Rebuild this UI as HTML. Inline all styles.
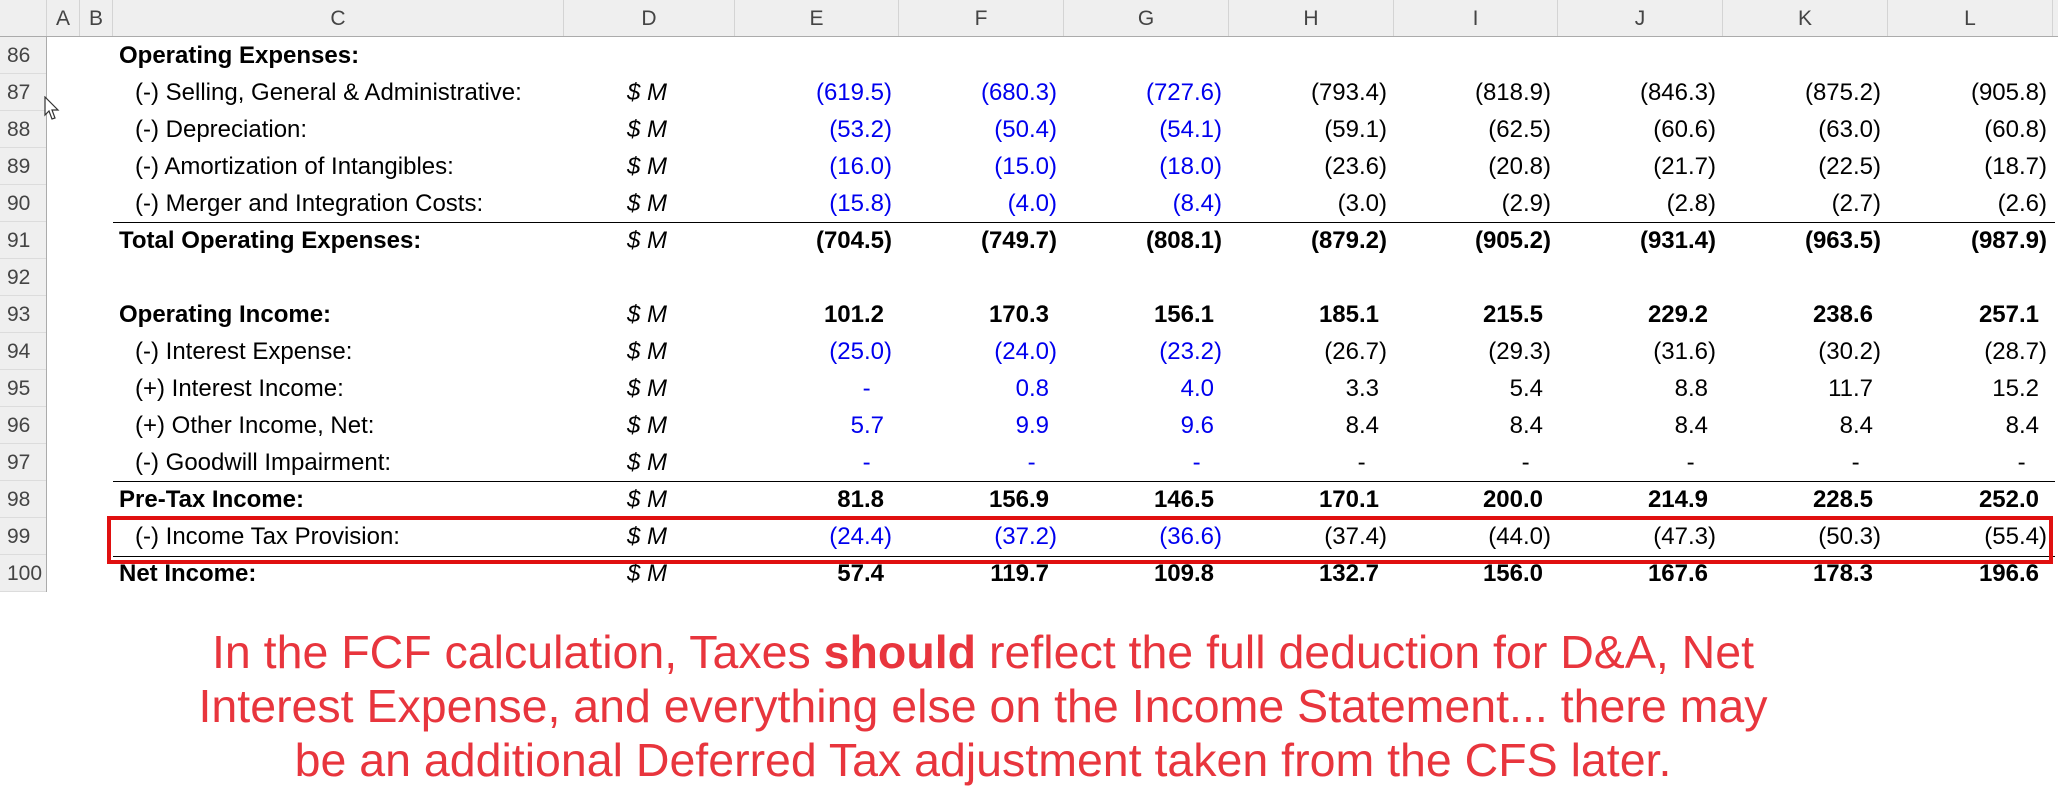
<!DOCTYPE html>
<html><head><meta charset="utf-8"><style>
body{margin:0;width:2058px;height:811px;background:#fff;overflow:hidden;font-family:"Liberation Sans",Arial,sans-serif;position:relative}
.hdr{position:absolute;left:0;top:0;width:2058px;height:37px;background:#efefef;border-bottom:1px solid #ababab;box-sizing:border-box}
.hdr div{position:absolute;top:0;height:36px;line-height:38px;text-align:center;font-size:21px;color:#444;border-right:1px solid #d4d4d4;box-sizing:border-box}
.rn{position:absolute;left:0;top:37px;width:47px;height:555px;background:#efefef;border-right:1px solid #ababab;box-sizing:border-box}
.rn div{height:37px;line-height:37px;font-size:21px;color:#444;padding-left:7px;border-bottom:1px solid #dcdcdc;box-sizing:border-box}
.row{position:absolute;left:0;width:2058px;height:37px;line-height:37px;font-size:24px;color:#000}
.row span{position:absolute;top:0;white-space:nowrap}
.b{font-weight:bold}
.v{text-align:right;width:160px}
.blue{color:#0000ee}
.ln{position:absolute;left:113px;width:1942px;height:1px;background:#000}
.note{position:absolute;left:0;width:1966px;text-align:center;color:#e8353d;font-size:46.5px;line-height:54px;top:625px}
</style></head><body>
<div class="hdr">
<div style="left:0;width:47px"></div>
<div style="left:47px;width:33px">A</div>
<div style="left:80px;width:33px">B</div>
<div style="left:113px;width:451px">C</div>
<div style="left:564px;width:171px">D</div>
<div style="left:735px;width:164px">E</div>
<div style="left:899px;width:165px">F</div>
<div style="left:1064px;width:165px">G</div>
<div style="left:1229px;width:165px">H</div>
<div style="left:1394px;width:164px">I</div>
<div style="left:1558px;width:165px">J</div>
<div style="left:1723px;width:165px">K</div>
<div style="left:1888px;width:165px">L</div>
</div>
<div class="rn"><div>86</div><div>87</div><div>88</div><div>89</div><div>90</div><div>91</div><div>92</div><div>93</div><div>94</div><div>95</div><div>96</div><div>97</div><div>98</div><div>99</div><div>100</div></div>
<div id="rows"></div>
<div class="ln" style="top:222px"></div>
<div class="ln" style="top:481px"></div>
<div class="ln" style="top:556px"></div>
<div style="position:absolute;left:107px;top:516px;width:1946px;height:48px;border:4px solid #e01010;box-sizing:border-box"></div>
<div class="note">In the FCF calculation, Taxes <b>should</b> reflect the full deduction for D&amp;A, Net<br>Interest Expense, and everything else on the Income Statement... there may<br>be an additional Deferred Tax adjustment taken from the CFS later.</div>
<svg style="position:absolute;left:44px;top:96px" width="18" height="26" viewBox="0 0 18 26"><path d="M1 1 L1 19 L5 15 L8 23 L11 22 L8 14 L14 14 Z" fill="#fff" stroke="#333" stroke-width="1.2"/></svg>
<script>
const R=[
["Operating Expenses:",1,null],
["(-) Selling, General & Administrative:",0,["(619.5)","(680.3)","(727.6)","(793.4)","(818.9)","(846.3)","(875.2)","(905.8)"]],
["(-) Depreciation:",0,["(53.2)","(50.4)","(54.1)","(59.1)","(62.5)","(60.6)","(63.0)","(60.8)"]],
["(-) Amortization of Intangibles:",0,["(16.0)","(15.0)","(18.0)","(23.6)","(20.8)","(21.7)","(22.5)","(18.7)"]],
["(-) Merger and Integration Costs:",0,["(15.8)","(4.0)","(8.4)","(3.0)","(2.9)","(2.8)","(2.7)","(2.6)"]],
["Total Operating Expenses:",1,["(704.5)","(749.7)","(808.1)","(879.2)","(905.2)","(931.4)","(963.5)","(987.9)"]],
["",0,null],
["Operating Income:",1,["101.2","170.3","156.1","185.1","215.5","229.2","238.6","257.1"]],
["(-) Interest Expense:",0,["(25.0)","(24.0)","(23.2)","(26.7)","(29.3)","(31.6)","(30.2)","(28.7)"]],
["(+) Interest Income:",0,["-&nbsp;&nbsp;","0.8","4.0","3.3","5.4","8.8","11.7","15.2"]],
["(+) Other Income, Net:",0,["5.7","9.9","9.6","8.4","8.4","8.4","8.4","8.4"]],
["(-) Goodwill Impairment:",0,["-&nbsp;&nbsp;","-&nbsp;&nbsp;","-&nbsp;&nbsp;","-&nbsp;&nbsp;","-&nbsp;&nbsp;","-&nbsp;&nbsp;","-&nbsp;&nbsp;","-&nbsp;&nbsp;"]],
["Pre-Tax Income:",1,["81.8","156.9","146.5","170.1","200.0","214.9","228.5","252.0"]],
["(-) Income Tax Provision:",0,["(24.4)","(37.2)","(36.6)","(37.4)","(44.0)","(47.3)","(50.3)","(55.4)"]],
["Net Income:",1,["57.4","119.7","109.8","132.7","156.0","167.6","178.3","196.6"]]];
const rights=[892,1057,1222,1387,1551,1716,1881,2047];
let h="";
R.forEach((r,i)=>{
 const top=37+i*37;
 const bold=r[1];
 h+=`<div class="row" style="top:${top}px">`;
 if(r[0])h+=`<span class="${bold?'b':''}" style="left:${bold?119:135}px">${r[0].replace('&','&amp;')}</span>`;
 if(r[2]){
  h+=`<span style="left:627px;font-style:italic">$ M</span>`;
  r[2].forEach((v,j)=>{
   const blue=!bold&&j<3;
   const paren=v.endsWith(")");
   h+=`<span class="v ${bold?'b':''} ${blue?'blue':''}" style="left:${rights[j]-160+(paren?0:-8)}px">${v}</span>`;
  });
 }
 h+="</div>";
});
document.getElementById("rows").innerHTML=h;
</script>
</body></html>
